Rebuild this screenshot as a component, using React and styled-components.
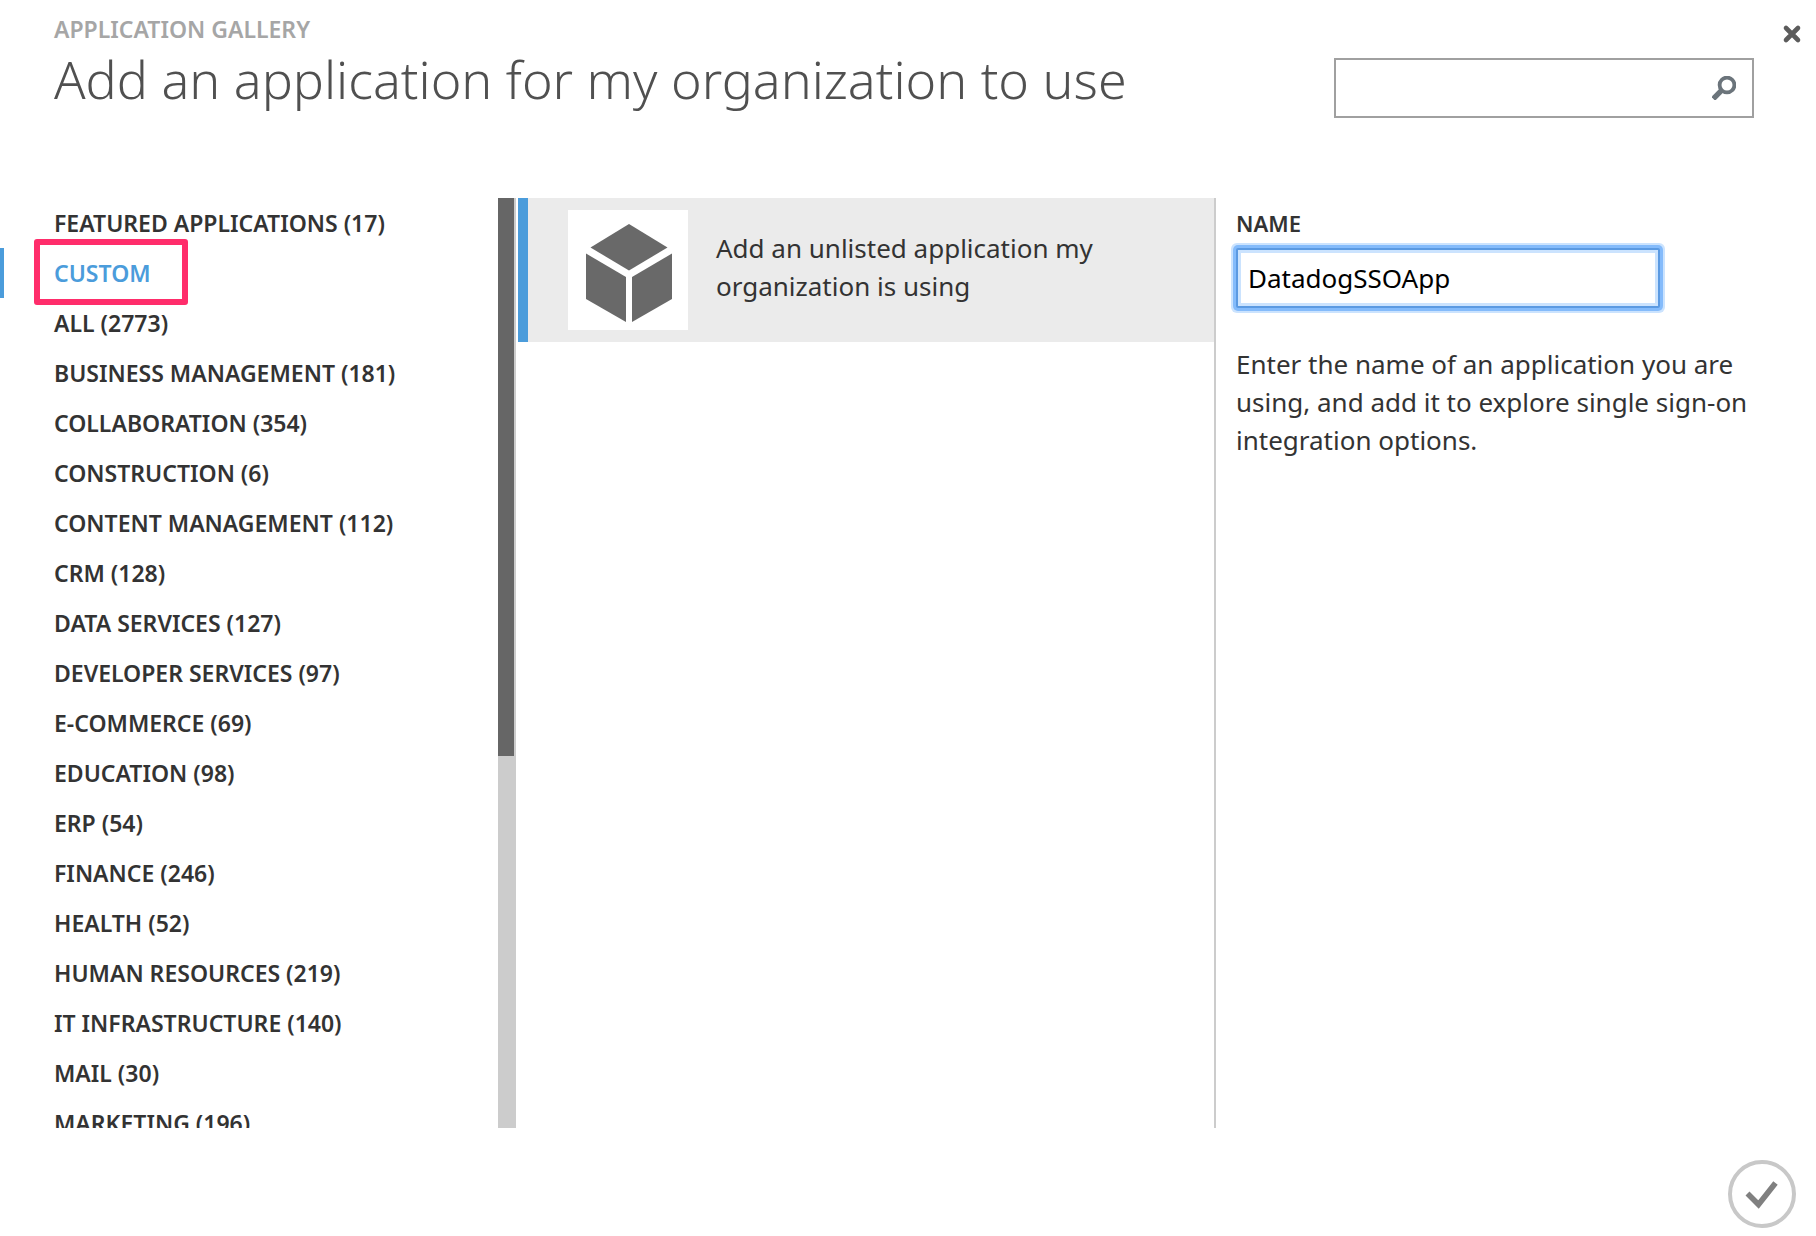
import React, { useState } from "react";
import styled, { createGlobalStyle } from "styled-components";

const GlobalStyle = createGlobalStyle`
  *, *::before, *::after { box-sizing: border-box; }
  body {
    margin: 0;
    background: #fff;
    color: #333;
    font-family: "Noto Sans", "Open Sans", sans-serif;
    font-size: 26px;
    line-height: 38px;
  }
`;

const Dialog = styled.div`
  position: relative;
  display: flex;
  flex-direction: column;
  height: 100vh;
  background: #fff;
`;

const Header = styled.header`
  flex: none;
  display: flex;
  justify-content: space-between;
  align-items: flex-start;
  height: 198px;
  padding: 14px 62px 0 54px;
`;

const Eyebrow = styled.p`
  margin: 0;
  font-size: 23px;
  line-height: 30px;
  font-weight: 600;
  color: #a6a6a6;
`;

const Title = styled.h1`
  margin: 0;
  font-size: 52px;
  line-height: 70px;
  font-weight: 300;
  color: #505050;
`;

const SearchBox = styled.form`
  display: flex;
  align-items: center;
  width: 420px;
  height: 60px;
  margin-top: 44px;
  padding: 0 16px 0 12px;
  border: 2px solid #a0a0a0;
`;

const SearchInput = styled.input`
  flex: 1;
  min-width: 0;
  border: 0;
  outline: 0;
  background: transparent;
  font: inherit;
`;

const IconButton = styled.button`
  display: block;
  padding: 0;
  border: 0;
  background: none;
  cursor: pointer;
  svg { display: block; }
`;

const CloseButton = styled(IconButton)`
  position: absolute;
  top: 24px;
  right: 14px;
`;

const Main = styled.main`
  flex: 1;
  min-height: 0;
  display: grid;
  grid-template-columns: 518px 1fr 602px;
  grid-template-rows: minmax(0, 1fr);
`;

const Sidebar = styled.nav`
  display: flex;
  padding-right: 2px;
`;

const CategoryList = styled.ul`
  flex: 1;
  margin: 0;
  padding: 0;
  list-style: none;
  overflow-y: auto;
  scrollbar-width: none;
`;

const Category = styled.li`
  position: relative;
`;

const CategoryLink = styled.a`
  display: block;
  height: 50px;
  padding-left: 50px;
  border-left: 4px solid ${(p) => (p.$active ? "#4b9cdb" : "transparent")};
  font-size: 23px;
  line-height: 50px;
  font-weight: 600;
  color: ${(p) => (p.$active ? "#4b9cdb" : "#333")};
  text-decoration: none;
  text-transform: uppercase;
`;

const Highlight = styled.span`
  position: absolute;
  z-index: 1;
  top: -9px;
  left: 34px;
  width: 154px;
  height: 66px;
  border: 6px solid #ff2d6b;
  border-radius: 3px;
  pointer-events: none;
`;

const ScrollTrack = styled.div`
  width: 18px;
  padding-right: 2px;
  background: #ccc;
`;

const ScrollThumb = styled.div`
  height: 60%;
  background: #666;
`;

const Results = styled.section`
  min-width: 0;
`;

const AppCard = styled.button`
  display: flex;
  align-items: flex-start;
  gap: 28px;
  width: 100%;
  height: 144px;
  padding: 12px 40px;
  border: 0;
  border-left: 10px solid #4b9cdb;
  background: #ebebeb;
  color: #333;
  font: inherit;
  text-align: left;
  cursor: pointer;
`;

const AppIcon = styled.span`
  flex: none;
  width: 120px;
  height: 120px;
  background: #fff;
  svg { display: block; }
`;

const AppName = styled.span`
  max-width: 400px;
  padding-top: 19px;
`;

const Details = styled.section`
  padding: 10px 40px 0 20px;
  border-left: 2px solid #ccc;
`;

const FieldLabel = styled.label`
  display: block;
  font-size: 22px;
  line-height: 30px;
  font-weight: 600;
`;

const NameInput = styled.input`
  display: block;
  width: 424px;
  height: 60px;
  margin-top: 10px;
  padding: 0 10px;
  border: 2px solid #5b9ae2;
  border-radius: 2px;
  outline: 0;
  box-shadow:
    0 0 0 3px #84bbfb,
    0 0 0 5px #cbe3fe,
    inset 0 0 0 3px #cbe3fe;
  color: #000;
  font: inherit;
`;

const HelpText = styled.p`
  margin: 37px 0 0;
`;

const Footer = styled.footer`
  flex: none;
  display: flex;
  justify-content: flex-end;
  align-items: flex-start;
  height: 108px;
  padding: 32px 20px 0 0;
`;

const categories = [
  { name: "Featured applications", count: 17 },
  { name: "Custom" },
  { name: "All", count: 2773 },
  { name: "Business management", count: 181 },
  { name: "Collaboration", count: 354 },
  { name: "Construction", count: 6 },
  { name: "Content management", count: 112 },
  { name: "CRM", count: 128 },
  { name: "Data services", count: 127 },
  { name: "Developer services", count: 97 },
  { name: "E-commerce", count: 69 },
  { name: "Education", count: 98 },
  { name: "ERP", count: 54 },
  { name: "Finance", count: 246 },
  { name: "Health", count: 52 },
  { name: "Human resources", count: 219 },
  { name: "IT infrastructure", count: 140 },
  { name: "Mail", count: 30 },
  { name: "Marketing", count: 196 },
];

const SearchIcon = () => (
  <svg width="24" height="24" viewBox="0 0 24 24" fill="none" stroke="#6b747b" aria-hidden="true">
    <circle cx="15" cy="9" r="7.4" strokeWidth="3.8" />
    <path d="M9.6 14.4 L1.2 22.8" strokeWidth="5.4" />
  </svg>
);

const CloseIcon = () => (
  <svg width="20" height="20" viewBox="0 0 20 20" fill="none" stroke="#5c5c5c" strokeWidth="4.6" strokeLinecap="round" aria-hidden="true">
    <path d="M4 4 L16 16 M16 4 L4 16" />
  </svg>
);

const CubeIcon = () => (
  <svg width="120" height="120" viewBox="0 0 120 120" fill="#696969" aria-hidden="true">
    <path d="M61 14 L99.5 37.5 L61 60.5 L22.5 37.5 Z" />
    <path d="M18 43.5 L58 67 V112 L18 89 Z" />
    <path d="M104 43.5 L64 67 V112 L104 89 Z" />
  </svg>
);

const CheckIcon = () => (
  <svg width="68" height="68" viewBox="0 0 68 68" fill="none" aria-hidden="true">
    <circle cx="34" cy="34" r="32" stroke="#c8c8c8" strokeWidth="4" />
    <path d="M19.5 33.5 L30.5 44.5 L47.5 23" stroke="#808080" strokeWidth="5.6" />
  </svg>
);

export default function App() {
  const [active, setActive] = useState("Custom");
  const [name, setName] = useState("DatadogSSOApp");
  const [query, setQuery] = useState("");

  return (
    <>
      <GlobalStyle />
      <Dialog>
        <Header>
          <div>
            <Eyebrow>APPLICATION GALLERY</Eyebrow>
            <Title>Add an application for my organization to use</Title>
          </div>
          <SearchBox role="search" onSubmit={(e) => e.preventDefault()}>
            <SearchInput
              type="text"
              aria-label="Search applications"
              value={query}
              onChange={(e) => setQuery(e.target.value)}
            />
            <IconButton type="submit" aria-label="Search">
              <SearchIcon />
            </IconButton>
          </SearchBox>
        </Header>

        <Main>
          <Sidebar aria-label="Categories">
            <CategoryList>
              {categories.map((c) => (
                <Category key={c.name}>
                  <CategoryLink
                    href="#"
                    $active={c.name === active}
                    onClick={(e) => {
                      e.preventDefault();
                      setActive(c.name);
                    }}
                  >
                    {c.count ? `${c.name} (${c.count})` : c.name}
                  </CategoryLink>
                  {c.name === "Custom" && <Highlight />}
                </Category>
              ))}
            </CategoryList>
            <ScrollTrack>
              <ScrollThumb />
            </ScrollTrack>
          </Sidebar>

          <Results>
            <AppCard type="button">
              <AppIcon>
                <CubeIcon />
              </AppIcon>
              <AppName>Add an unlisted application my organization is using</AppName>
            </AppCard>
          </Results>

          <Details>
            <FieldLabel htmlFor="app-name">NAME</FieldLabel>
            <NameInput
              id="app-name"
              type="text"
              value={name}
              onChange={(e) => setName(e.target.value)}
            />
            <HelpText>
              Enter the name of an application you are using, and add it to explore single sign-on
              integration options.
            </HelpText>
          </Details>
        </Main>

        <Footer>
          <IconButton type="button" aria-label="Complete">
            <CheckIcon />
          </IconButton>
        </Footer>

        <CloseButton type="button" aria-label="Close">
          <CloseIcon />
        </CloseButton>
      </Dialog>
    </>
  );
}
